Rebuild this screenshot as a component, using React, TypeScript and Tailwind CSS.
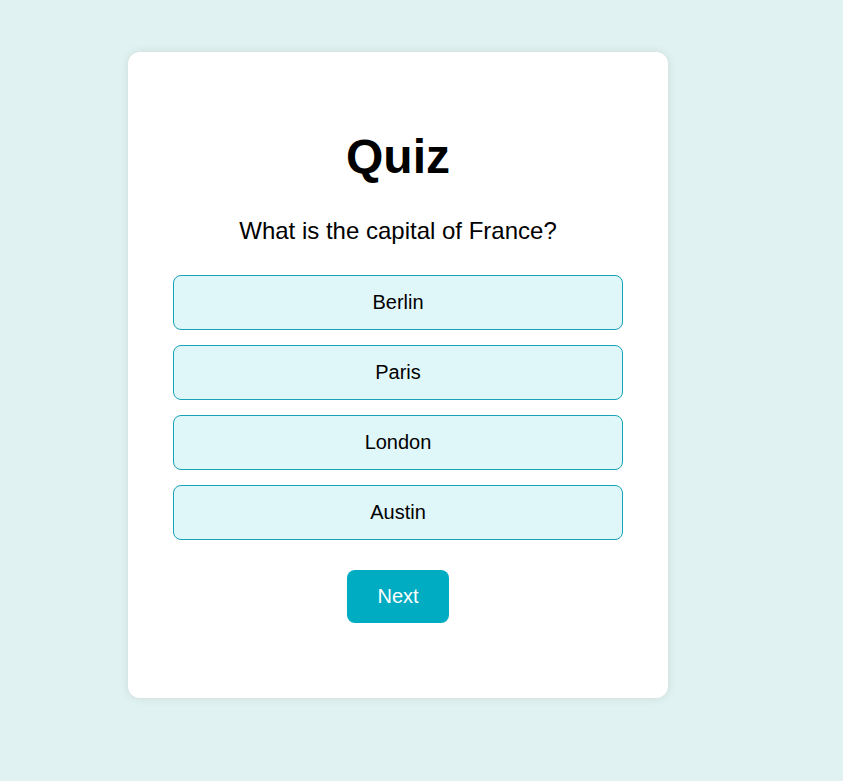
import React from 'react'

const options = ['Berlin', 'Paris', 'London', 'Austin']

export default function App() {
    const [selected, setSelected] = React.useState<string | null>(null)

    return (
        <div
            className="min-h-[781px] w-full bg-[#e0f2f1] pt-[52px] pl-[128px]"
            style={{ fontFamily: '"Liberation Sans", Arial, sans-serif' }}
        >
            <div className="w-[540px] rounded-[12px] bg-white px-[45px] pt-[77px] pb-[75px] shadow-[0_0_10px_rgba(0,0,0,0.1)] flex flex-col items-center">
                <h1 className="h-[56px] text-[48px] font-bold leading-[56px] text-black">
                    Quiz
                </h1>
                <p className="mt-[32px] h-[28px] text-[24px] leading-[28px] text-black">
                    What is the capital of France?
                </p>
                <div className="mt-[30px] flex w-full flex-col gap-[15px]">
                    {options.map((opt) => (
                        <button
                            key={opt}
                            onClick={() => setSelected(opt)}
                            className={`h-[55px] w-full rounded-[8px] border border-[#17a2b8] pb-[2px] text-[20px] text-black ${
                                selected === opt ? 'bg-[#b2ebf2]' : 'bg-[#e0f7fa]'
                            }`}
                        >
                            {opt}
                        </button>
                    ))}
                </div>
                <button className="mt-[30px] h-[53px] w-[102px] rounded-[8px] bg-[#00acc1] pb-[2px] text-[20px] text-white">
                    Next
                </button>
            </div>
        </div>
    )
}
